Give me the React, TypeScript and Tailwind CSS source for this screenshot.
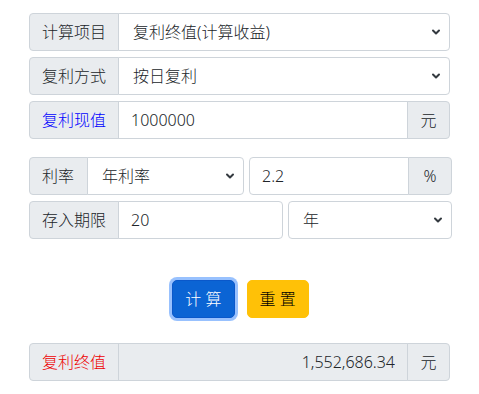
import { useState } from 'react'

const font = { fontFamily: '"Noto Sans", "Noto Sans CJK SC", sans-serif' }

function Chevron() {
  return (
    <svg className="pointer-events-none absolute right-[9px] top-1/2 -translate-y-1/2" width="10" height="8" viewBox="0 0 10 8" fill="none">
      <path d="M2 2.5 5 5.5 8 2.5" stroke="#343a40" strokeWidth="2" strokeLinecap="round" strokeLinejoin="round" />
    </svg>
  )
}

function Addon({ children, className = '' }: { children: React.ReactNode; className?: string }) {
  return (
    <span className={`flex items-center px-3 h-[38px] bg-[#e9ecef] border border-[#ced4da] text-[16px] leading-6 whitespace-nowrap ${className}`}>
      {children}
    </span>
  )
}

function Select({ value, options, className = '' }: { value: string; options: string[]; className?: string }) {
  return (
    <div className={`relative flex-1 min-w-0 ${className}`}>
      <select
        defaultValue={value}
        className="w-full h-[38px] appearance-none bg-white border border-[#ced4da] pl-[14px] pr-9 text-[16px] leading-6 font-light text-[#212529] outline-none rounded-[inherit]"
        style={font}
      >
        {options.map(o => (
          <option key={o}>{o}</option>
        ))}
      </select>
      <Chevron />
    </div>
  )
}

export default function App() {
  const [principal, setPrincipal] = useState('1000000')
  const [rate, setRate] = useState('2.2')
  const [years, setYears] = useState('20')

  return (
    <div className="w-[479px] h-[394px] bg-white text-[#212529] font-light px-[29px] pt-[13px]" style={font}>
      <div className="flex flex-col gap-[6px]">
        <div className="flex">
          <Addon className="w-[90px] rounded-l-[4px]">计算项目</Addon>
          <Select value="复利终值(计算收益)" options={['复利终值(计算收益)', '复利现值(计算本金)']} className="rounded-r-[4px] -ml-px" />
        </div>
        <div className="flex">
          <Addon className="w-[90px] rounded-l-[4px]">复利方式</Addon>
          <Select value="按日复利" options={['按日复利', '按月复利', '按年复利']} className="rounded-r-[4px] -ml-px" />
        </div>
        <div className="flex">
          <Addon className="w-[90px] rounded-l-[4px] text-[#0000ff]">复利现值</Addon>
          <input
            value={principal}
            onChange={e => setPrincipal(e.target.value)}
            className="flex-1 min-w-0 h-[38px] -ml-px border border-[#ced4da] px-3 text-[16px] leading-6 font-light outline-none"
            style={font}
          />
          <Addon className="-ml-px rounded-r-[4px] w-[43px] justify-center">元</Addon>
        </div>
      </div>

      <div className="mt-[18px] flex flex-col gap-[6px]">
        <div className="grid grid-cols-[215px_203px] gap-[5px]">
          <div className="flex">
            <Addon className="w-[59px] rounded-l-[4px]">利率</Addon>
            <Select value="年利率" options={['年利率', '月利率', '日利率']} className="rounded-r-[4px] -ml-px" />
          </div>
          <div className="flex">
            <input
              value={rate}
              onChange={e => setRate(e.target.value)}
              className="flex-1 min-w-0 h-[38px] border border-[#ced4da] rounded-l-[4px] px-3 text-[16px] leading-6 font-light outline-none"
              style={font}
            />
            <Addon className="-ml-px rounded-r-[4px] w-[44px] justify-center">%</Addon>
          </div>
        </div>
        <div className="grid grid-cols-[254px_164px] gap-[5px]">
          <div className="flex">
            <Addon className="w-[90px] rounded-l-[4px]">存入期限</Addon>
            <input
              value={years}
              onChange={e => setYears(e.target.value)}
              className="flex-1 min-w-0 h-[38px] -ml-px border border-[#ced4da] rounded-r-[4px] px-3 text-[16px] leading-6 font-light outline-none"
              style={font}
            />
          </div>
          <div className="flex">
            <Select value="年" options={['年', '月', '日']} className="rounded-[4px]" />
          </div>
        </div>
      </div>

      <div className="mt-[41px] flex justify-center gap-[12px] pl-[2px]">
        <button className="h-[38px] px-3 rounded-[5px] bg-[#0b64d4] border border-[#0a58ca] text-white text-[16px] leading-6 font-light shadow-[0_0_0_3px_rgba(49,132,253,0.5)]" style={font}>
          计 算
        </button>
        <button className="h-[38px] px-3 rounded-[5px] bg-[#ffc107] border border-[#ffc107] text-black text-[16px] leading-6 font-light" style={font}>
          重 置
        </button>
      </div>

      <div className="mt-[25px] flex">
        <Addon className="w-[90px] rounded-l-[4px] text-[#ee0000]">复利终值</Addon>
        <input
          readOnly
          value="1,552,686.34"
          className="flex-1 min-w-0 h-[38px] -ml-px bg-[#e9ecef] border border-[#ced4da] pl-3 pr-[12px] text-right text-[16px] leading-6 font-light outline-none"
          style={font}
        />
        <Addon className="-ml-px rounded-r-[4px] w-[43px] justify-center">元</Addon>
      </div>
    </div>
  )
}
